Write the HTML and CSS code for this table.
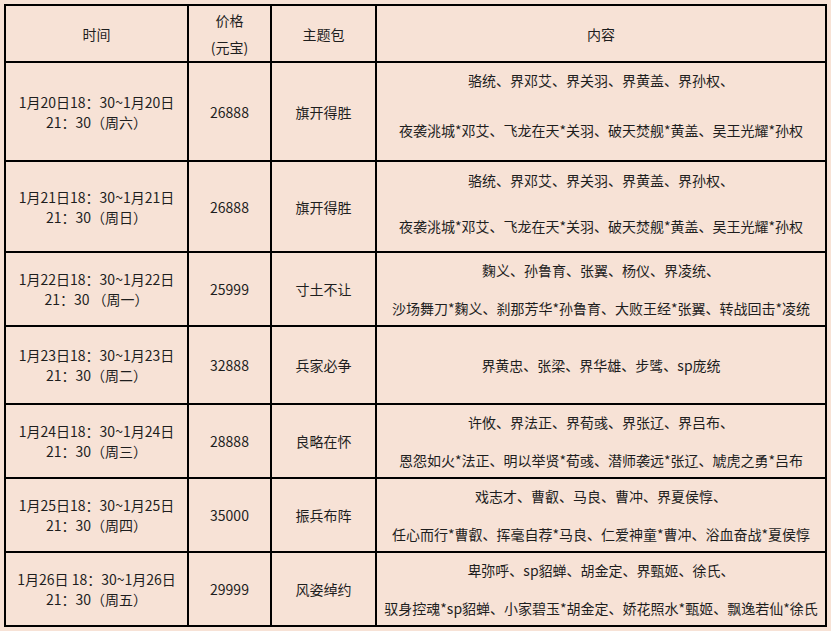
FILE: index.html
```html
<!DOCTYPE html>
<html lang="zh-CN">
<head>
<meta charset="utf-8">
<title>主题包</title>
<link rel="stylesheet" href="styles.css">
</head>
<body>
<table class="sched">
  <tr class="r-head">
    <th class="c-time">时间</th>
    <th class="c-price"><div class="stack g-head"><span>价格</span><span>(元宝)</span></div></th>
    <th class="c-pack">主题包</th>
    <th class="c-content">内容</th>
  </tr>
  <tr class="r-1">
    <td><span>1月20日18：30~1月20日</span><br><span>21：30（周六）</span></td>
    <td>26888</td>
    <td>旗开得胜</td>
    <td><div class="stack g-1"><span>骆统、界邓艾、界关羽、界黄盖、界孙权、</span><span>夜袭洮城*邓艾、飞龙在天*关羽、破天焚舰*黄盖、吴王光耀*孙权</span></div></td>
  </tr>
  <tr class="r-2">
    <td><span>1月21日18：30~1月21日</span><br><span>21：30（周日）</span></td>
    <td>26888</td>
    <td>旗开得胜</td>
    <td><div class="stack g-2"><span>骆统、界邓艾、界关羽、界黄盖、界孙权、</span><span>夜袭洮城*邓艾、飞龙在天*关羽、破天焚舰*黄盖、吴王光耀*孙权</span></div></td>
  </tr>
  <tr class="r-3">
    <td><span>1月22日18：30~1月22日</span><br><span>21：30 （周一）</span></td>
    <td>25999</td>
    <td>寸土不让</td>
    <td><div class="stack g-3"><span>麴义、孙鲁育、张翼、杨仪、界凌统、</span><span>沙场舞刀*麴义、刹那芳华*孙鲁育、大败王经*张翼、转战回击*凌统</span></div></td>
  </tr>
  <tr class="r-4">
    <td><span>1月23日18：30~1月23日</span><br><span>21：30（周二）</span></td>
    <td>32888</td>
    <td>兵家必争</td>
    <td>界黄忠、张梁、界华雄、步骘、sp庞统</td>
  </tr>
  <tr class="r-5">
    <td><span>1月24日18：30~1月24日</span><br><span>21：30（周三）</span></td>
    <td>28888</td>
    <td>良略在怀</td>
    <td><div class="stack g-3"><span>许攸、界法正、界荀彧、界张辽、界吕布、</span><span>恩怨如火*法正、明以举贤*荀彧、潜师袭远*张辽、虓虎之勇*吕布</span></div></td>
  </tr>
  <tr class="r-6">
    <td><span>1月25日18：30~1月25日</span><br><span>21：30（周四）</span></td>
    <td>35000</td>
    <td>振兵布阵</td>
    <td><div class="stack g-3"><span>戏志才、曹叡、马良、曹冲、界夏侯惇、</span><span>任心而行*曹叡、挥毫自荐*马良、仁爱神童*曹冲、浴血奋战*夏侯惇</span></div></td>
  </tr>
  <tr class="r-7">
    <td><span>1月26日 18：30~1月26日</span><br><span>21：30（周五）</span></td>
    <td>29999</td>
    <td>风姿绰约</td>
    <td><div class="stack g-3"><span>卑弥呼、sp貂蝉、胡金定、界甄姬、徐氏、</span><span>驭身控魂*sp貂蝉、小家碧玉*胡金定、娇花照水*甄姬、飘逸若仙*徐氏</span></div></td>
  </tr>
</table>
</body>
</html>
```

FILE: styles.css
```css
html, body {
  margin: 0;
  padding: 0;
  background: #f7e2d6;
}

body {
  padding: 4px;
  font-family: "Noto Sans CJK SC", "Noto Sans", sans-serif;
  font-size: 14px;
  line-height: 20px;
  color: #1e1e1e;
}

.sched {
  border-collapse: separate;
  border-spacing: 0;
  table-layout: fixed;
  width: 823px;
  border-left: 2px solid #000;
  border-top: 2px solid #000;
}

.sched th,
.sched td {
  box-sizing: border-box;
  padding: 0;
  border-right: 2px solid #000;
  border-bottom: 2px solid #000;
  text-align: center;
  vertical-align: middle;
  font-weight: normal;
  white-space: nowrap;
}

.c-time { width: 183px; }
.c-price { width: 83px; }
.c-pack { width: 105px; }
.c-content { width: 450px; }

.r-head { height: 57px; }
.r-1 { height: 99px; }
.r-2 { height: 91px; }
.r-3 { height: 74px; }
.r-4 { height: 78px; }
.r-5 { height: 74px; }
.r-6 { height: 74px; }
.r-7 { height: 74px; }

.stack {
  display: flex;
  flex-direction: column;
  align-items: center;
}

.g-head { gap: 7px; }
.g-1 { gap: 30px; padding-bottom: 13px; }
.g-2 { gap: 26px; padding-bottom: 7px; }
.g-3 { gap: 18px; }
```
